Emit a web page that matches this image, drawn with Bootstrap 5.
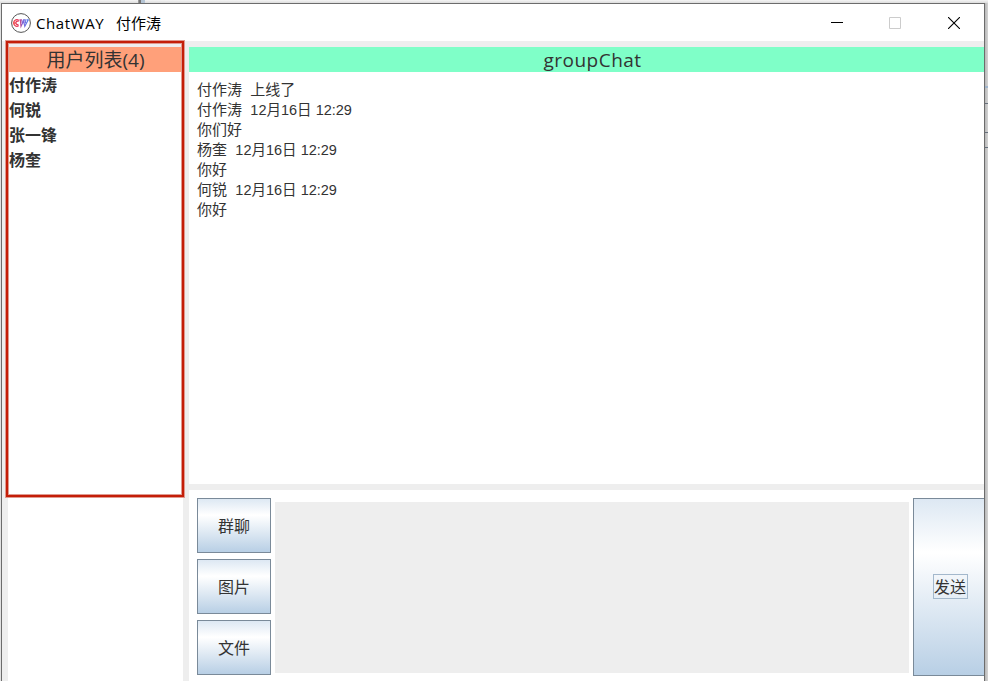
<!DOCTYPE html>
<html lang="zh-CN">
<head>
<meta charset="utf-8">
<meta name="viewport" content="width=device-width, initial-scale=1">
<title>ChatWAY</title>
<link href="https://cdn.jsdelivr.net/npm/bootstrap@5.3.0/dist/css/bootstrap.min.css" rel="stylesheet">
<style>
body{height:681px;overflow:hidden;padding:3px 3px 0 1px;color:#333;
  background:linear-gradient(90deg,#d4d4d4 0,#eee 1px,#eee 984px,#b8b8b8 985px,#d4d4d4 988px);
  font-family:"Open Sans","Noto Sans CJK SC",sans-serif}
.topstrip{left:0;top:0;width:988px;height:3px;background:linear-gradient(#f5f5f5,#dcdcdc)}
.topstrip i{position:absolute;left:138px;top:0;width:7px;height:3px;background:linear-gradient(90deg,#999 1px,#777 1px 3px,#b5c5d5 3px)}
.behind{left:985px;width:3px;height:1px;background:#66707c}
.behind.pale{height:2px;background:#9fb4cc}
.win{height:678px;border:1px solid #6c6c6c;border-bottom:0;background:#eee}
.titlebar{height:37px;padding-left:9px;color:#000}
.caption{font-size:15px;line-height:20px;margin-left:5px;white-space:pre}
.app-name{letter-spacing:.6px}
.winctl{width:58px;height:35px}
.winctl:last-child{width:60px}
.content-area{padding:6px 0 0 6px;gap:6px}
.users{width:175px}
.heading{height:25px;line-height:27px;font-size:19px;overflow:hidden}
.salmon{background:#ffa07a}
.mint{background:#7fffc8;letter-spacing:.5px}
.mint span{padding-left:12px}
.user-row{height:25px;line-height:27px;font-size:16px;padding-left:1px}
.main-col{gap:6px}
.messages{height:412px;padding:8px 8px 0;font:15px/20px "Liberation Sans","Noto Sans CJK SC",sans-serif;white-space:pre}
.messages time{font-size:14.5px}
.composer{height:191px;padding:8px 0 0 8px;gap:4px}
.tools{width:74px;gap:6px}
.swing{border:1px solid #7a8a99;border-radius:0;background:linear-gradient(#dde8f3 0,#fff 30%,#fff 31%,#b8cfe5 100%);color:#333;font-size:16px;line-height:24px;padding:0}
.tools .swing{height:55px}
.entry{height:171px;margin-top:4px;background:#eee;border:0;border-radius:0;resize:none}
.send{width:71px;height:178px;border-right:0;padding:0 0 2px 2px}
.send span{display:inline-block;width:35px;height:25px;line-height:25px;border:1px solid #a3b8cc;white-space:nowrap}
.highlight-box{left:6px;top:41px;width:178px;height:456px;border:2px solid #c41e08;box-shadow:0 0 0 1px #e09a90,inset 0 0 0 1px #e09a90}
</style>
<script src="https://cdn.jsdelivr.net/npm/bootstrap@5.3.0/dist/js/bootstrap.bundle.min.js"></script>
</head>
<body>
<div class="topstrip position-absolute"><i></i></div>
<div class="behind pale position-absolute" style="top:86px"></div>
<div class="behind position-absolute" style="top:103px"></div>
<div class="behind position-absolute" style="top:132px"></div>
<div class="behind position-absolute" style="top:147px"></div>
<div class="win d-flex flex-column position-relative">
  <header class="titlebar d-flex align-items-center bg-white flex-shrink-0">
    <svg width="20" height="20" viewBox="0 0 20 20" fill="none">
      <defs><linearGradient id="lg" gradientUnits="userSpaceOnUse" x1="2" y1="0" x2="18" y2="0"><stop stop-color="#f02828"/><stop offset=".4" stop-color="#e04070"/><stop offset=".6" stop-color="#8068d8"/><stop offset="1" stop-color="#5080f0"/></linearGradient></defs>
      <circle cx="10" cy="10" r="9.4" stroke="#555" stroke-width="1"/>
      <path d="M8 7.4C5.6 5.8 2.6 7.2 2.7 10c.1 3 3 4.2 5.1 2.6M7.6 8.6c-1.4-.8-2.7-.2-2.7 1.3 0 1.5 1.4 2 2.5 1.4M2.7 10h2.2M9.3 6.8l.7 6.6 2.6-5.4 1.2 5.4L17.3 6.8M8.5 6.9h2.6M12 6.9h2.2l.3 3.2M15.4 6.9h2.4M10.8 7l.5 3" stroke="url(#lg)" stroke-width="1.2"/>
    </svg>
    <div class="caption"><span class="app-name">ChatWAY</span>   付作涛</div>
    <div class="d-flex ms-auto">
      <div class="winctl d-flex align-items-center justify-content-center"><svg width="12" height="12"><path d="M0 5.5h12" stroke="#000"/></svg></div>
      <div class="winctl d-flex align-items-center justify-content-center"><svg width="12" height="12"><path d="M.5.5h11v11H.5z" stroke="#ccc" fill="none"/></svg></div>
      <div class="winctl d-flex align-items-center justify-content-center"><svg width="12" height="12"><path d="M0 0l12 12M12 0L0 12" stroke="#000" stroke-width="1.1"/></svg></div>
    </div>
  </header>
  <div class="content-area d-flex flex-grow-1">
    <aside class="users bg-white flex-shrink-0">
      <div class="heading salmon text-center">用户列表(4)</div>
      <ul class="list-unstyled mb-0 fw-bold">
        <li class="user-row">付作涛</li>
        <li class="user-row">何锐</li>
        <li class="user-row">张一锋</li>
        <li class="user-row">杨奎</li>
      </ul>
    </aside>
    <main class="main-col d-flex flex-column flex-grow-1">
      <section class="bg-white">
        <div class="heading mint text-center"><span>groupChat</span></div>
        <div class="messages">付作涛  上线了
付作涛  <time>12月16日 12:29</time>
你们好
杨奎  <time>12月16日 12:29</time>
你好
何锐  <time>12月16日 12:29</time>
你好</div>
      </section>
      <section class="composer bg-white d-flex align-items-start">
        <div class="tools d-flex flex-column flex-shrink-0">
          <button class="btn swing">群聊</button>
          <button class="btn swing">图片</button>
          <button class="btn swing">文件</button>
        </div>
        <textarea class="entry flex-grow-1"></textarea>
        <button class="btn swing send flex-shrink-0"><span>发送</span></button>
      </section>
    </main>
  </div>
</div>
<div class="highlight-box position-absolute"></div>
</body>
</html>
